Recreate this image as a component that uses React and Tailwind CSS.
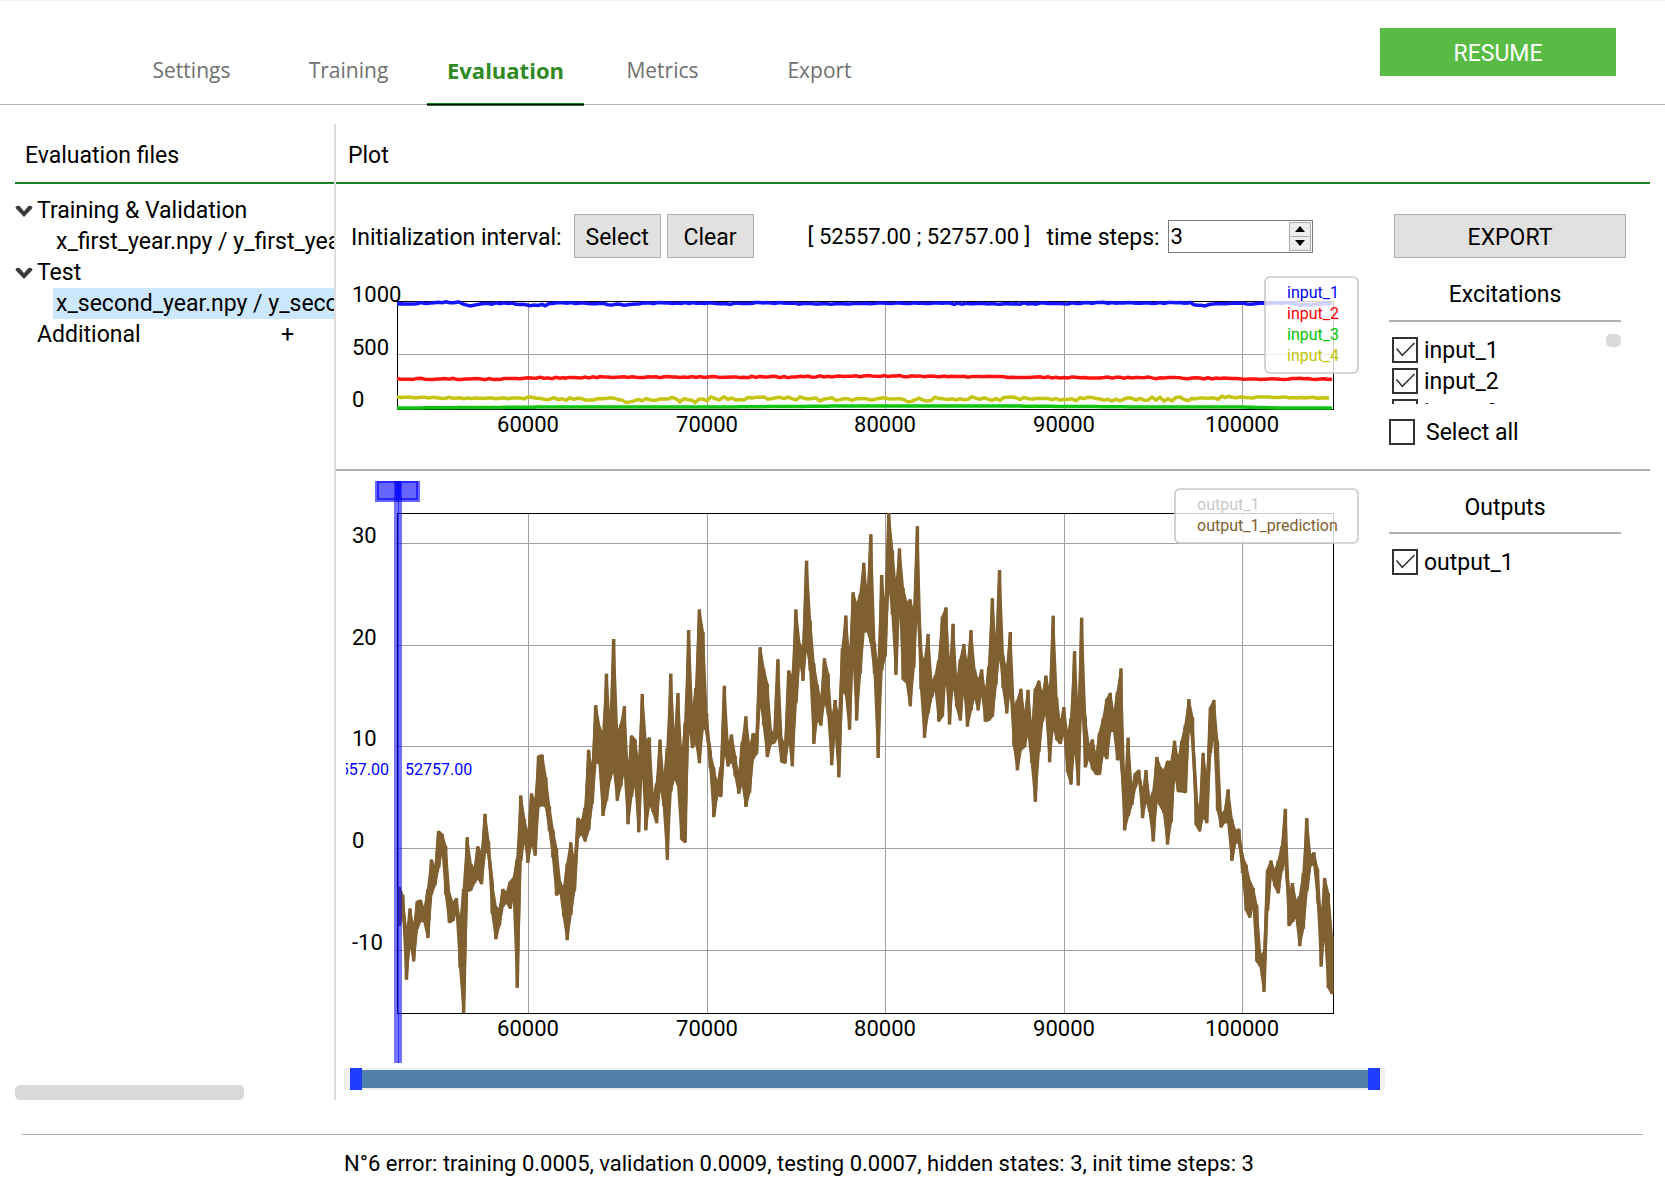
import React, { useState } from "react";

const TABS = ["Settings", "Training", "Evaluation", "Metrics", "Export"];

// Highest and lowest prediction (in tenths) for each downsampled time slot
const PREDICTION = [
  [-38, -76], [-46, -61], [-87, -129], [-59, -91], [-79, -111], [-52, -79], [-51, -71], [-61, -72], [-40, -88], [-11, -45],
  [-21, -36], [17, -19], [14, 2], [2, -45], [-44, -73], [-54, -71], [-49, -61], [-74, -117], [-40, -162], [11, -42],
  [-15, -41], [-21, -34], [2, -29], [-6, -35], [34, -4], [7, -4], [-34, -64], [-57, -89], [-61, -76], [-40, -57],
  [-44, -53], [-33, -59], [-29, -45], [-10, -137], [52, -12], [29, 11], [11, -14], [54, 7], [45, -7], [91, 41],
  [92, 43], [70, 41], [41, 18], [18, -9], [0, -46], [-33, -42], [-40, -67], [-15, -90], [6, -65], [-15, -42],
  [30, 11], [26, 15], [40, 7], [97, 18], [75, 44], [141, 86], [120, 83], [111, 32], [172, 47], [116, 68],
  [206, 79], [112, 47], [122, 61], [140, 79], [71, 24], [111, 51], [107, 67], [80, 16], [152, 90], [105, 18],
  [109, 45], [48, 36], [64, 25], [107, 64], [64, 42], [99, -11], [172, 56], [100, 70], [153, 62], [86, 9],
  [124, 6], [215, 126], [130, 99], [158, 105], [235, 84], [213, 119], [133, 116], [95, 80], [79, 31], [62, 53],
  [80, 51], [160, 98], [100, 81], [112, 87], [91, 72], [69, 54], [105, 65], [130, 41], [98, 55], [113, 88],
  [112, 93], [198, 149], [177, 121], [162, 90], [116, 103], [112, 104], [186, 112], [107, 85], [103, 84], [175, 110],
  [167, 81], [235, 143], [202, 189], [195, 165], [283, 202], [224, 175], [182, 103], [161, 128], [143, 121], [187, 146],
  [172, 133], [125, 82], [146, 120], [126, 70], [197, 156], [229, 151], [182, 117], [252, 198], [239, 126], [250, 172],
  [281, 213], [244, 214], [309, 203], [202, 172], [174, 89], [269, 175], [231, 189], [330, 264], [293, 230], [254, 171],
  [295, 251], [256, 166], [241, 163], [245, 140], [230, 178], [317, 248], [192, 157], [183, 109], [211, 133], [162, 149],
  [170, 159], [185, 125], [228, 130], [237, 175], [172, 122], [221, 166], [159, 139], [186, 126], [201, 161], [178, 120],
  [215, 136], [176, 151], [164, 136], [176, 156], [151, 125], [179, 126], [246, 130], [192, 161], [274, 195], [189, 158],
  [175, 133], [213, 159], [136, 101], [146, 77], [157, 97], [128, 100], [156, 116], [113, 84], [157, 46], [165, 95],
  [150, 125], [170, 136], [151, 85], [229, 122], [148, 107], [121, 103], [139, 116], [110, 75], [128, 63], [194, 105],
  [123, 62], [227, 152], [127, 80], [100, 90], [107, 78], [89, 73], [114, 73], [128, 94], [147, 88], [153, 115],
  [130, 116], [154, 87], [177, 90], [52, 18], [109, 32], [56, 43], [74, 60], [77, 71], [52, 30], [77, 49],
  [47, 36], [56, 7], [90, 48], [80, 42], [76, 35], [86, 4], [85, 26], [106, 75], [86, 56], [106, 56],
  [122, 55], [147, 120], [129, 109], [52, 23], [33, 17], [94, 32], [64, 25], [139, 94], [146, 116], [104, 39],
  [32, 21], [37, 26], [58, 25], [29, -12], [17, 5], [19, 7], [-8, -24], [-16, -61], [-32, -68], [-39, -53],
  [-57, -111], [-106, -116], [-102, -141], [-21, -61], [-12, -23], [-23, -37], [-12, -44], [2, -22], [39, -8], [-49, -76],
  [-34, -72], [-53, -66], [-47, -96], [-24, -79], [30, -42], [-8, -17], [-4, -15], [-21, -49], [-72, -116], [-29, -79],
  [-44, -137], [-86, -143],
];

// Trend of each excitation as [x, y, jitter], the jitter is spread between the points
const INPUTS = [
  {
    name: "input_4",
    color: "#c4c411",
    trend: [[397, 397, 1], [460, 398, 1], [520, 398, 2], [550, 399, 2], [610, 399, 3], [630, 401, 3], [660, 398, 3], [695, 401, 4], [720, 398, 3], [780, 399, 3], [860, 399, 3], [915, 400, 4], [940, 398, 3], [1120, 399, 3], [1210, 399, 2], [1225, 397, 1], [1333, 398, 2]],
  },
  {
    name: "input_3",
    color: "#0fc40f",
    trend: [[397, 408, 0], [560, 407, 0], [720, 407, 0], [850, 406, 0], [1000, 406, 0], [1150, 407, 0], [1240, 407, 0], [1280, 408, 0], [1333, 408, 0]],
  },
  {
    name: "input_2",
    color: "#ff1414",
    trend: [[397, 379, 1], [500, 379, 1], [540, 378, 1], [565, 378, 1], [600, 377, 1], [780, 377, 1], [880, 376, 1], [1000, 377, 1], [1180, 378, 1], [1260, 379, 1], [1333, 379, 1]],
  },
  {
    name: "input_1",
    color: "#1414ff",
    trend: [[397, 304, 1], [430, 303, 1], [459, 302, 0], [463, 304, 0], [470, 306, 0], [480, 304, 1], [508, 303, 1], [522, 305, 1], [545, 305, 1], [555, 303, 1], [580, 303, 1], [624, 305, 1], [645, 303, 1], [700, 303, 1], [730, 304, 1], [755, 303, 1], [850, 304, 1], [910, 303, 1], [980, 304, 1], [1100, 303, 1], [1190, 303, 1], [1201, 306, 1], [1215, 304, 1], [1285, 303, 1], [1300, 305, 1], [1333, 303, 1]],
  },
];

const X_TICKS = [
  { x: 528, label: "60000" },
  { x: 707, label: "70000" },
  { x: 885, label: "80000" },
  { x: 1064, label: "90000" },
  { x: 1242, label: "100000" },
];

const slotX = (i) => (399.3 + i * 3.573).toFixed(1);
const valueY = (v) => (848.5 - v * 1.0165).toFixed(1);

const highs = PREDICTION.map(([hi], i) => `${slotX(i)},${valueY(hi)}`);
const lows = PREDICTION.map(([, lo], i) => `${slotX(i)},${valueY(lo)}`);
const predictionBand = [...highs, ...[...lows].reverse()].join(" ");
const predictionLine = highs.map((p, i) => `${p} ${lows[i]}`).join(" ");

const noise = (n) => {
  const s = Math.sin(n * 12.9898) * 43758.5453;
  return (s - Math.floor(s)) * 2 - 1;
};

const trendPoints = (trend, seed) => {
  const points = [];
  for (let i = 0; i < trend.length - 1; i++) {
    const [x0, y0, j] = trend[i];
    const [x1, y1] = trend[i + 1];
    for (let x = x0; x < x1; x += 4) {
      const y = y0 + ((y1 - y0) * (x - x0)) / (x1 - x0) + noise(x + seed) * j * 0.7;
      points.push(`${x},${y.toFixed(1)}`);
    }
  }
  return points.join(" ");
};

const XAxis = ({ top, bottom, baseline }) => (
  <g>
    {X_TICKS.map((t) => (
      <g key={t.label}>
        <line x1={t.x + 0.5} x2={t.x + 0.5} y1={top} y2={bottom} stroke="#a0a0a4" />
        <text x={t.x} y={baseline} textAnchor="middle" className="text-[22px]">
          {t.label}
        </text>
      </g>
    ))}
  </g>
);

const InputsPlot = () => (
  <svg viewBox="344 258 1041 211" className="block w-full h-auto" role="img" aria-label="Excitations plot">
    <XAxis top={301} bottom={409} baseline={432} />
    <line x1="396" x2="1333" y1="354.5" y2="354.5" stroke="#a0a0a4" />
    <rect x="397.5" y="301.5" width="936" height="108" fill="none" stroke="#000" />
    {INPUTS.map((s, i) => (
      <polyline key={s.name} points={trendPoints(s.trend, i * 7)} fill="none" stroke={s.color} strokeWidth="3.5" />
    ))}
    <text x="352" y="302" className="text-[22px]">1000</text>
    <text x="352" y="355" className="text-[22px]">500</text>
    <text x="352" y="407" className="text-[22px]">0</text>
    <rect x="1265" y="277" width="93" height="96" rx="5" fill="#fff" fillOpacity="0.8" stroke="#c8c8c8" strokeWidth="1.6" />
    <g className="text-[16px]">
      <text x="1287" y="298" fill="#0000ff">input_1</text>
      <text x="1287" y="319" fill="#ff0000">input_2</text>
      <text x="1287" y="340" fill="#00c400">input_3</text>
      <text x="1287" y="361" fill="#c4c400">input_4</text>
    </g>
  </svg>
);

const OutputsPlot = () => (
  <svg viewBox="344 471 1041 597" className="block w-full h-auto" role="img" aria-label="Outputs plot">
    <clipPath id="view">
      <rect x="346" y="481" width="1039" height="587" />
    </clipPath>
    <XAxis top={513} bottom={1013} baseline={1036} />
    {[543, 645, 746, 848, 950].map((y, i) => (
      <g key={y}>
        <line x1="396" x2="1333" y1={y + 0.5} y2={y + 0.5} stroke="#a0a0a4" />
        <text x="352" y={y} className="text-[22px]">
          {30 - i * 10}
        </text>
      </g>
    ))}
    <rect x="397.5" y="513.5" width="936" height="500" fill="none" stroke="#000" />
    <polygon points={predictionBand} fill="#806030" stroke="#806030" strokeWidth="2" strokeLinejoin="bevel" />
    <polyline points={predictionLine} fill="none" stroke="#806030" strokeWidth="3.5" strokeLinejoin="bevel" />
    {/* Initialization interval markers */}
    <g clipPath="url(#view)" fill="#0000ff">
      <rect x="394" y="481" width="5" height="582" fillOpacity="0.55" />
      <rect x="398" y="481" width="4" height="582" fillOpacity="0.55" />
      <g fillOpacity="0.6" stroke="#0000ff" strokeOpacity="0.6" strokeWidth="4">
        <rect x="377" y="481" width="20" height="19" />
        <rect x="399" y="481" width="19" height="19" />
      </g>
      <g className="text-[16px]">
        <text x="389" y="775" textAnchor="end">52557.00</text>
        <text x="405" y="775">52757.00</text>
      </g>
    </g>
    <rect x="1175" y="489" width="183" height="54" rx="5" fill="#fff" fillOpacity="0.8" stroke="#c8c8c8" strokeWidth="1.6" />
    <g className="text-[16px]">
      <text x="1197" y="510" fill="#c8c8cc">output_1</text>
      <text x="1197" y="531" fill="#806030">output_1_prediction</text>
    </g>
  </svg>
);

const Checkbox = ({ label, checked, onChange, className = "gap-1.5" }) => (
  <label className={`flex items-center h-[31px] leading-7 ${className}`}>
    <span className="grid">
      <input
        type="checkbox"
        checked={checked}
        onChange={onChange}
        className="peer col-start-1 row-start-1 w-[26px] h-[26px] appearance-none border-2 border-[#333333] bg-white"
      />
      <svg viewBox="0 0 26 26" className="invisible peer-checked:visible pointer-events-none col-start-1 row-start-1 w-[26px] h-[26px]">
        <path d="M4.5 11.5 L10.3 18.3 L22.5 6" fill="none" stroke="#333" strokeWidth="1.5" />
      </svg>
    </span>
    <span className="pt-[3px]">{label}</span>
  </label>
);

const Chevron = () => (
  <svg viewBox="0 0 18 12" className="w-[18px] h-3">
    <path d="M1 1.5 Q3.5 0 5.5 2 L9 6.2 L12.5 2 Q14.5 0 17 1.5 L17.5 3 L9 12 L0.5 3 Z" fill="#3a3a3a" />
  </svg>
);

const GreyButton = ({ children, className }) => (
  <button type="button" className={`h-11 pt-0.5 bg-[#e1e1e1] border border-[#adadad] hover:bg-[#e5f1fb] ${className}`}>
    {children}
  </button>
);

const SpinButton = ({ label, path, onClick, className = "" }) => (
  <button
    type="button"
    aria-label={label}
    onClick={onClick}
    className={`grow flex items-center justify-center bg-[#ececec] border border-[#adadad] ${className}`}
  >
    <svg viewBox="0 0 10 6" className="w-[10px] h-1.5">
      <path d={path} />
    </svg>
  </button>
);

const thumbStyle =
  "absolute inset-0 w-full h-full appearance-none bg-transparent pointer-events-none [&::-webkit-slider-thumb]:appearance-none [&::-webkit-slider-thumb]:pointer-events-auto [&::-webkit-slider-thumb]:w-3 [&::-webkit-slider-thumb]:h-[22px] [&::-webkit-slider-thumb]:bg-[#1f3dff]";

const App = () => {
  const [tab, setTab] = useState("Evaluation");
  const [steps, setSteps] = useState(3);
  const [range, setRange] = useState([0, 100]);
  const [checked, setChecked] = useState({ input_1: true, input_2: true, input_3: true, input_4: true, output_1: true });
  const [selectAll, setSelectAll] = useState(false);

  const toggle = (name) => setChecked({ ...checked, [name]: !checked[name] });

  return (
    <div className="bg-white text-black text-[23px] leading-[31px] font-[Roboto,sans-serif]">
      <header className="flex justify-between items-end border-t border-t-[#f0f0f0] border-b border-b-[#b0b0b0] h-[105px] pl-[113px] pr-[49px]">
        <nav className="flex font-['Open_Sans',sans-serif]">
          {TABS.map((t) => (
            <button
              key={t}
              type="button"
              onClick={() => setTab(t)}
              className={`flex flex-col w-[157px] -mb-0.5 ${t === tab ? "text-[22px] text-[#2f8a24] font-bold" : "text-[21px] text-[#707070]"}`}
            >
              <span className="w-full pb-[17px]">{t}</span>
              <span className={`w-full h-[3px] ${t === tab ? "bg-black border-y border-[#1a7f1f]" : ""}`} />
            </button>
          ))}
        </nav>
        <button type="button" className="self-start mt-[27px] pt-0.5 w-[236px] h-12 bg-[#58bb44] text-white hover:bg-[#4caf3a]">
          RESUME
        </button>
      </header>

      <main className="flex mt-[19px] mx-[15px]">
        {/* File tree */}
        <aside className="flex flex-col w-[319px] shrink-0 overflow-hidden">
          <h2 className="h-[60px] pt-4 pl-[10px] border-b-2 border-[#1a7f1f]">Evaluation files</h2>
          <ul className="pt-[11px] whitespace-nowrap grow">
            <li>
              <div className="flex items-center gap-1">
                <Chevron />
                Training &amp; Validation
              </div>
              <div className="ml-[38px] pl-[3px]">x_first_year.npy / y_first_year.npy</div>
            </li>
            <li>
              <div className="flex items-center gap-1">
                <Chevron />
                Test
              </div>
              <div className="ml-[38px] pl-[3px] bg-[#cce8ff]">x_second_year.npy / y_second_year.npy</div>
            </li>
            <li className="flex justify-between pl-[22px] pr-10">
              Additional
              <button type="button" aria-label="Add file">+</button>
            </li>
          </ul>
          <div className="w-[229px] h-[15px] rounded-[5px] bg-[#d9d9d9]" />
        </aside>

        <div className="w-0.5 bg-[#dcdcdc]" />

        <div className="grow min-w-0">
          <h2 className="h-[60px] pt-4 pl-3 border-b-2 border-[#1a7f1f]">Plot</h2>

          <section className="flex gap-1 pl-2 pr-6 border-b-2 border-[#b0b0b0]">
            <div className="grow min-w-0">
              <div className="flex items-center pt-[30px] pl-[7px] whitespace-nowrap">
                <span className="pt-0.5">Initialization interval:</span>
                <GreyButton className="ml-3 w-[87px]">Select</GreyButton>
                <GreyButton className="ml-1.5 w-[87px]">Clear</GreyButton>
                <span className="ml-[54px] text-[22px]">[ 52557.00 ; 52757.00 ]</span>
                <label htmlFor="steps" className="ml-4 pt-0.5">time steps:</label>
                <div className="flex shrink-0 ml-2 w-[145px] h-[33px] border border-[#7a7a7a] p-px">
                  <input
                    id="steps"
                    type="number"
                    value={steps}
                    onChange={(e) => setSteps(Number(e.target.value))}
                    className="grow min-w-0 pl-px text-[22px] outline-none [appearance:textfield] [&::-webkit-inner-spin-button]:appearance-none"
                  />
                  <div className="flex flex-col shrink-0 w-[22px]">
                    <SpinButton label="More steps" path="M5 0 L10 6 H0 Z" onClick={() => setSteps(steps + 1)} />
                    <SpinButton label="Fewer steps" path="M0 0 H10 L5 6 Z" onClick={() => setSteps(steps - 1)} className="border-t-0" />
                  </div>
                </div>
              </div>
              <InputsPlot />
            </div>

            <div className="w-[237px] shrink-0 pt-[30px]">
              <GreyButton className="ml-[5px] w-[232px]">EXPORT</GreyButton>
              <div className="w-[232px]">
                <h3 className="pt-[21px] pb-[10px] text-center border-b-2 border-[#b0b0b0]">Excitations</h3>
                <div className="flex justify-between items-start mt-3 pl-[3px] h-[70px] overflow-hidden">
                  <div>
                    {["input_1", "input_2", "input_3", "input_4"].map((name) => (
                      <Checkbox key={name} label={name} checked={checked[name]} onChange={() => toggle(name)} />
                    ))}
                  </div>
                  <div className="w-[15px] h-[13px] rounded-[5px] bg-[#d9d9d9]" />
                </div>
                <Checkbox label="Select all" checked={selectAll} onChange={() => setSelectAll(!selectAll)} className="mt-3 gap-[11px]" />
              </div>
            </div>
          </section>

          <section className="flex gap-1 pl-2 pr-6">
            <div className="grow min-w-0">
              <OutputsPlot />
              <div className="bg-[#f0f0f0] pl-1.5 pr-[5px] mb-[10px]">
                <div className="relative h-[22px] py-0.5">
                  <div className="h-full bg-[#5080ab]" />
                  <input type="range" aria-label="Range start" value={range[0]} onChange={(e) => setRange([Number(e.target.value), range[1]])} className={thumbStyle} />
                  <input type="range" aria-label="Range end" value={range[1]} onChange={(e) => setRange([range[0], Number(e.target.value)])} className={thumbStyle} />
                </div>
              </div>
            </div>

            <div className="w-[237px] shrink-0">
              <div className="w-[232px] pt-[21px]">
                <h3 className="pb-[9px] text-center border-b-2 border-[#b0b0b0]">Outputs</h3>
                <div className="mt-3 pl-[3px]">
                  <Checkbox label="output_1" checked={checked.output_1} onChange={() => toggle("output_1")} />
                </div>
              </div>
            </div>
          </section>
        </div>
      </main>

      <footer className="mx-[22px] mt-[34px] pt-[13px] pl-[322px] pb-1.5 text-[22px] border-t border-[#b0b0b0]">
        N°6 error: training 0.0005, validation 0.0009, testing 0.0007, hidden states: 3, init time steps: 3
      </footer>
    </div>
  );
};

export default App;
